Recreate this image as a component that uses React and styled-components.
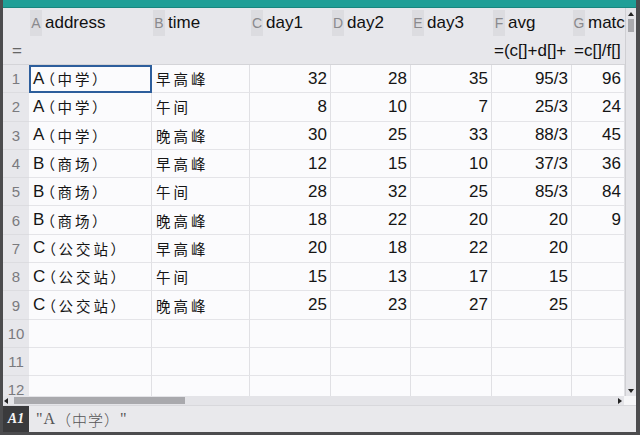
import styled, { createGlobalStyle } from "styled-components";

const Global = createGlobalStyle`
  html, body { margin: 0; padding: 0; background: #fff; }
  body { font-family: "Liberation Sans", "Noto Sans CJK SC", sans-serif; }
`;

const Frame = styled.div`
  width: 640px;
  height: 435px;
  box-sizing: border-box;
  display: flex;
  flex-direction: column;
  border-left: 3px solid #4c4c4e;
  border-right: 4px solid #4c4c4e;
  border-bottom: 3px solid #4c4c4e;
  background: #e8e8ec;
  overflow: hidden;
`;

const TopBar = styled.div`
  height: 8px;
  flex: none;
  background: #1f9f97;
  border-bottom: 1px solid #17877f;
  box-sizing: border-box;
`;

const Body = styled.div`
  flex: none;
  height: 388px;
  display: flex;
`;

const Sheet = styled.div`
  flex: 1;
  display: grid;
  grid-template-columns: 26px 123px 98px 81px 80px 81px 80px 53px;
  grid-template-rows: 30px 27px;
  grid-auto-rows: 28.3px;
  overflow: hidden;
  background: #fbfbfd;
`;

const HeadCell = styled.div`
  background: #e7e7eb;
  display: flex;
  align-items: center;
  padding-left: 1px;
  white-space: nowrap;
  overflow: hidden;
`;

const Letter = styled.span`
  align-self: stretch;
  margin: 2px 3px 2px 0;
  width: 12px;
  display: flex;
  align-items: center;
  justify-content: center;
  background: #dcdce0;
  color: #8a8a8e;
  font-size: 14px;
`;

const Name = styled.span`
  color: #111;
  font-size: 17px;
`;

const FormulaCell = styled.div`
  background: #e7e7eb;
  border-bottom: 1px solid #d4d4d8;
  display: flex;
  align-items: center;
  padding-left: 2px;
  font-size: 17px;
  color: #111;
  white-space: nowrap;
  overflow: hidden;
  justify-content: ${(p) => (p.$center ? "center" : "flex-start")};
  ${(p) => p.$center && "color:#666;"}
`;

const RowNum = styled.div`
  background: #e7e7eb;
  border-bottom: 1px solid #dcdce0;
  color: #7a7a7e;
  font-size: 15px;
  display: flex;
  align-items: center;
  justify-content: center;
`;

const Cell = styled.div`
  box-sizing: border-box;
  border-right: 1px solid #e0e0e4;
  border-bottom: 1px solid #e4e4e8;
  display: flex;
  align-items: center;
  justify-content: ${(p) => (p.$num ? "flex-end" : "flex-start")};
  padding: ${(p) => (p.$num ? "0 3px 0 0" : "0 0 0 4px")};
  font-size: 17px;
  color: #151515;
  white-space: nowrap;
  overflow: hidden;
  ${(p) => p.$selected && "outline: 2px solid #2d5e9c; outline-offset: -2px;"}
`;

const Cjk = styled.span`
  font-family: "Noto Sans CJK SC", sans-serif;
  font-size: 14.5px;
  letter-spacing: 3px;
  font-feature-settings: "palt";
  padding-left: 3px;
`;

const VScroll = styled.div`
  width: 11px;
  flex: none;
  background: #e4e4e8;
  border-left: 1px solid #cfcfd3;
  display: flex;
  flex-direction: column;
  align-items: center;
  padding-top: 4px;
  box-sizing: border-box;
`;

const Arrow = styled.div`
  width: 0;
  height: 0;
  border-left: 3px solid transparent;
  border-right: 3px solid transparent;
  ${(p) => (p.$down ? "border-top: 4px solid #222;" : "border-bottom: 4px solid #222;")}
  ${(p) => p.$down && "margin-top: auto; margin-bottom: 3px;"}
`;

const VThumb = styled.div`
  width: 6px;
  height: 13px;
  margin-top: 3px;
  background: #a9a9ad;
`;

const HScrollRow = styled.div`
  height: 9px;
  flex: none;
  display: flex;
`;

const HScroll = styled.div`
  flex: 1;
  background: #e4e4e8;
  display: flex;
  align-items: center;
  padding: 0 2px 0 1px;
`;

const HArrow = styled.div`
  width: 0;
  height: 0;
  border-top: 3px solid transparent;
  border-bottom: 3px solid transparent;
  ${(p) => (p.$right ? "border-left: 4px solid #222; margin-left: auto;" : "border-right: 4px solid #222;")}
`;

const HThumb = styled.div`
  width: 171px;
  height: 7px;
  margin-left: 6px;
  background: #a9a9ad;
`;

const Corner = styled.div`
  width: 12px;
  background: #f6f6f8;
`;

const Status = styled.div`
  flex: 1;
  display: flex;
  background: #e9e9ec;
  border-top: 1px solid #d8d8dc;
`;

const CellRef = styled.div`
  width: 26px;
  background: #3a3a3c;
  color: #f4f4f4;
  font-family: "Liberation Serif", serif;
  font-style: italic;
  font-weight: bold;
  font-size: 14px;
  display: flex;
  align-items: center;
  justify-content: center;
`;

const Entry = styled.div`
  padding-left: 7px;
  display: flex;
  align-items: center;
  font-family: "Liberation Serif", "Noto Sans CJK SC", serif;
  font-size: 16px;
  color: #555;
  letter-spacing: 1px;
`;

const EntryCjk = styled.span`
  font-family: "Noto Sans CJK SC", sans-serif;
  font-weight: 300;
  font-size: 15px;
`;

const columns = [
  ["A", "address"],
  ["B", "time"],
  ["C", "day1"],
  ["D", "day2"],
  ["E", "day3"],
  ["F", "avg"],
  ["G", "matc"],
];

const rows = [
  ["A（中学）", "早高峰", 32, 28, 35, "95/3", "96"],
  ["A（中学）", "午间", 8, 10, 7, "25/3", "24"],
  ["A（中学）", "晚高峰", 30, 25, 33, "88/3", "45"],
  ["B（商场）", "早高峰", 12, 15, 10, "37/3", "36"],
  ["B（商场）", "午间", 28, 32, 25, "85/3", "84"],
  ["B（商场）", "晚高峰", 18, 22, 20, "20", "9"],
  ["C（公交站）", "早高峰", 20, 18, 22, "20", ""],
  ["C（公交站）", "午间", 15, 13, 17, "15", ""],
  ["C（公交站）", "晚高峰", 25, 23, 27, "25", ""],
  ["", "", "", "", "", "", ""],
  ["", "", "", "", "", "", ""],
  ["", "", "", "", "", "", ""],
];

function Label({ text }) {
  return (
    <>
      {text[0]}
      <Cjk>{text.slice(1)}</Cjk>
    </>
  );
}

export default function App() {
  return (
    <>
      <Global />
      <Frame>
        <TopBar />
        <Body>
          <Sheet>
            <HeadCell />
            {columns.map(([l, n]) => (
              <HeadCell key={l}>
                <Letter>{l}</Letter>
                <Name>{n}</Name>
              </HeadCell>
            ))}
            <FormulaCell $center>=</FormulaCell>
            <FormulaCell />
            <FormulaCell />
            <FormulaCell />
            <FormulaCell />
            <FormulaCell />
            <FormulaCell>=(c[]+d[]+</FormulaCell>
            <FormulaCell>=c[]/f[]</FormulaCell>
            {rows.map((r, i) => [
              <RowNum key={"n" + i}>{i + 1}</RowNum>,
              <Cell key={"a" + i} $selected={i === 0}>
                {r[0] && <Label text={r[0]} />}
              </Cell>,
              <Cell key={"b" + i}>
                <Cjk style={{ paddingLeft: 0 }}>{r[1]}</Cjk>
              </Cell>,
              ...r.slice(2).map((v, j) => (
                <Cell key={i + "-" + j} $num>
                  {v}
                </Cell>
              )),
            ])}
          </Sheet>
          <VScroll>
            <Arrow />
            <VThumb />
            <Arrow $down />
          </VScroll>
        </Body>
        <HScrollRow>
          <HScroll>
            <HArrow />
            <HThumb />
            <HArrow $right />
          </HScroll>
          <Corner />
        </HScrollRow>
        <Status>
          <CellRef>A1</CellRef>
          <Entry>
            "A<EntryCjk>（中学）</EntryCjk>"
          </Entry>
        </Status>
      </Frame>
    </>
  );
}
